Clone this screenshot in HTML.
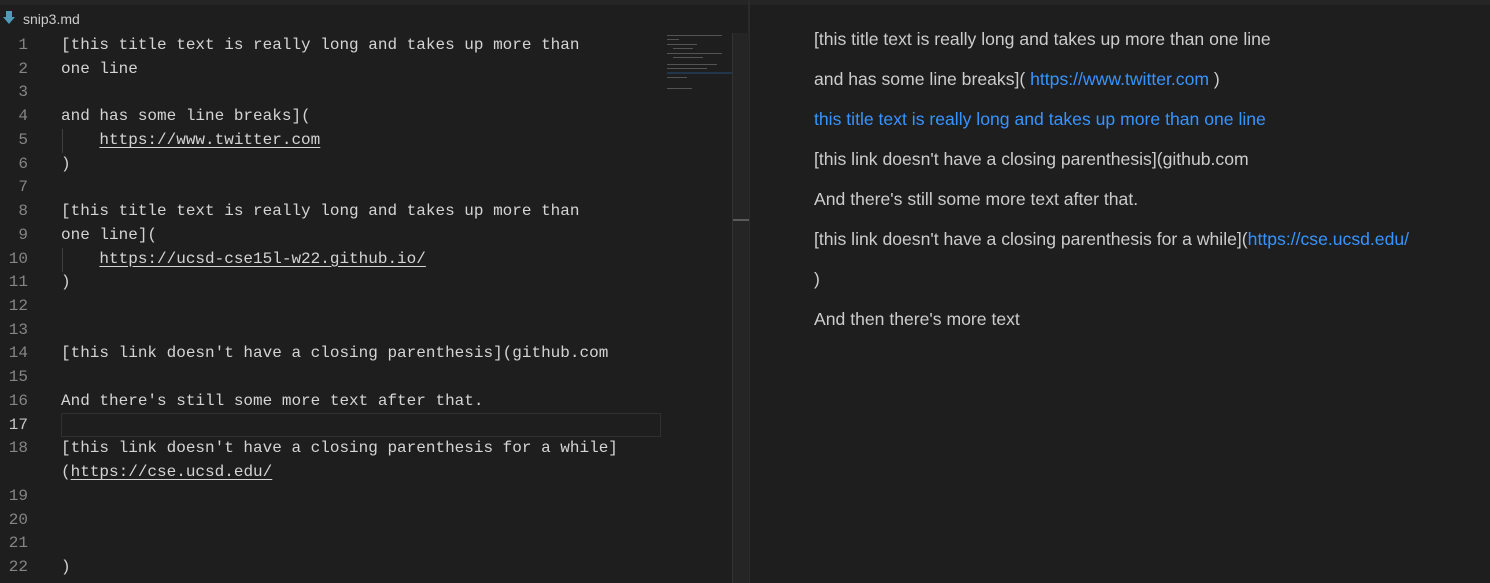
<!DOCTYPE html>
<html><head><style>
body{margin:0;width:1490px;height:583px;background:#1e1e1e;overflow:hidden;position:relative;font-family:"Liberation Mono",monospace;}
.top{position:absolute;left:0;top:0;width:1490px;height:5px;background:#252526;}
.tab{position:absolute;left:0;top:5px;height:27px;width:748px;color:#cccccc;font:14px "Liberation Sans",sans-serif;}
.tab span{position:absolute;left:23px;top:6px;}
.ed{position:absolute;left:0;top:34px;width:732px;}
.r{position:absolute;left:0;height:23.73px;line-height:23.73px;font-size:16px;color:#d4d4d4;white-space:pre;}
.n{position:absolute;width:28px;text-align:right;color:#858585;font-size:16px;height:23.73px;line-height:23.73px;}
.t{position:absolute;left:61px;}
u{text-decoration:underline;text-underline-offset:3px;}
.guide{position:absolute;left:62px;width:1px;background:#404040;}
.sb{position:absolute;left:732px;top:33px;width:16px;height:550px;background:#252526;border-left:1px solid #333;}
.sep{position:absolute;left:748px;top:0;width:2px;height:583px;background:#2b2b2b;}
.pv{position:absolute;left:814px;font:17.6px "Liberation Sans",sans-serif;color:#cccccc;white-space:pre;}
.a{color:#3794ff;}
</style></head><body>
<div class="top"></div>
<div class="tab"><svg style="position:absolute;left:3px;top:6px" width="12" height="14" viewBox="0 0 12 14"><path d="M3 0h6v6h3l-6 7-6-7h3z" fill="#519aba"/></svg><span>snip3.md</span></div>
<div class="sep"></div>
<div class="sb"><div style="position:absolute;top:186px;left:0;width:16px;height:2px;background:#5a5a5a"></div></div>
<div style="position:absolute;left:667px;top:33px;width:65px;height:60px;opacity:.5">
<div style="height:1px;background:#888;width:55px;margin:2px 0 3px"></div><div style="height:1px;background:#888;width:12px;margin-bottom:4px"></div>
<div style="height:1px;background:#888;width:30px;margin-bottom:3px"></div><div style="height:1px;background:#888;width:20px;margin:0 0 4px 6px"></div>
<div style="height:1px;background:#888;width:55px;margin-bottom:3px"></div><div style="height:1px;background:#888;width:30px;margin:0 0 6px 6px"></div>
<div style="height:1px;background:#888;width:50px;margin-bottom:3px"></div><div style="height:1px;background:#888;width:40px;margin-bottom:3px"></div>
<div style="height:2px;background:#264f78;width:65px;margin-bottom:3px"></div><div style="height:1px;background:#888;width:20px;margin-bottom:10px"></div>
<div style="height:1px;background:#888;width:25px"></div></div>
<div class="ed">
<div style="position:absolute;left:61px;top:379px;width:598px;height:22px;border:1px solid #303030"></div>
<div class="guide" style="top:95px;height:24px"></div>
<div class="guide" style="top:214px;height:24px"></div>

<div class="n" style="top:0px">1</div><div class="r t" style="top:0px">[this title text is really long and takes up more than</div>
<div class="n" style="top:23.73px">2</div><div class="r t" style="top:23.73px">one line</div>
<div class="n" style="top:47.46px">3</div>
<div class="n" style="top:71.19px">4</div><div class="r t" style="top:71.19px">and has some line breaks](</div>
<div class="n" style="top:94.92px">5</div><div class="r t" style="top:94.92px">    <u>https://www.twitter.com</u></div>
<div class="n" style="top:118.65px">6</div><div class="r t" style="top:118.65px">)</div>
<div class="n" style="top:142.38px">7</div>
<div class="n" style="top:166.11px">8</div><div class="r t" style="top:166.11px">[this title text is really long and takes up more than</div>
<div class="n" style="top:189.84px">9</div><div class="r t" style="top:189.84px">one line](</div>
<div class="n" style="top:213.57px">10</div><div class="r t" style="top:213.57px">    <u>https://ucsd-cse15l-w22.github.io/</u></div>
<div class="n" style="top:237.3px">11</div><div class="r t" style="top:237.3px">)</div>
<div class="n" style="top:261.03px">12</div>
<div class="n" style="top:284.76px">13</div>
<div class="n" style="top:308.49px">14</div><div class="r t" style="top:308.49px">[this link doesn't have a closing parenthesis](github.com</div>
<div class="n" style="top:332.22px">15</div>
<div class="n" style="top:355.95px">16</div><div class="r t" style="top:355.95px">And there's still some more text after that.</div>
<div class="n" style="top:379.68px;color:#c6c6c6">17</div>
<div class="n" style="top:403.41px">18</div><div class="r t" style="top:403.41px">[this link doesn't have a closing parenthesis for a while]</div>
<div class="r t" style="top:427.14px">(<u>https://cse.ucsd.edu/</u></div>
<div class="n" style="top:450.87px">19</div>
<div class="n" style="top:474.6px">20</div>
<div class="n" style="top:498.33px">21</div>
<div class="n" style="top:522.06px">22</div><div class="r t" style="top:522.06px">)</div>
</div>
<div class="pv" style="top:29px">[this title text is really long and takes up more than one line</div>
<div class="pv" style="top:69px">and has some line breaks]( <span class="a">https://www.twitter.com</span> )</div>
<div class="pv a" style="top:109px">this title text is really long and takes up more than one line</div>
<div class="pv" style="top:149px">[this link doesn't have a closing parenthesis](github.com</div>
<div class="pv" style="top:189px">And there's still some more text after that.</div>
<div class="pv" style="top:229px">[this link doesn't have a closing parenthesis for a while](<span class="a">https://cse.ucsd.edu/</span></div>
<div class="pv" style="top:269px">)</div>
<div class="pv" style="top:309px">And then there's more text</div>
</body></html>
